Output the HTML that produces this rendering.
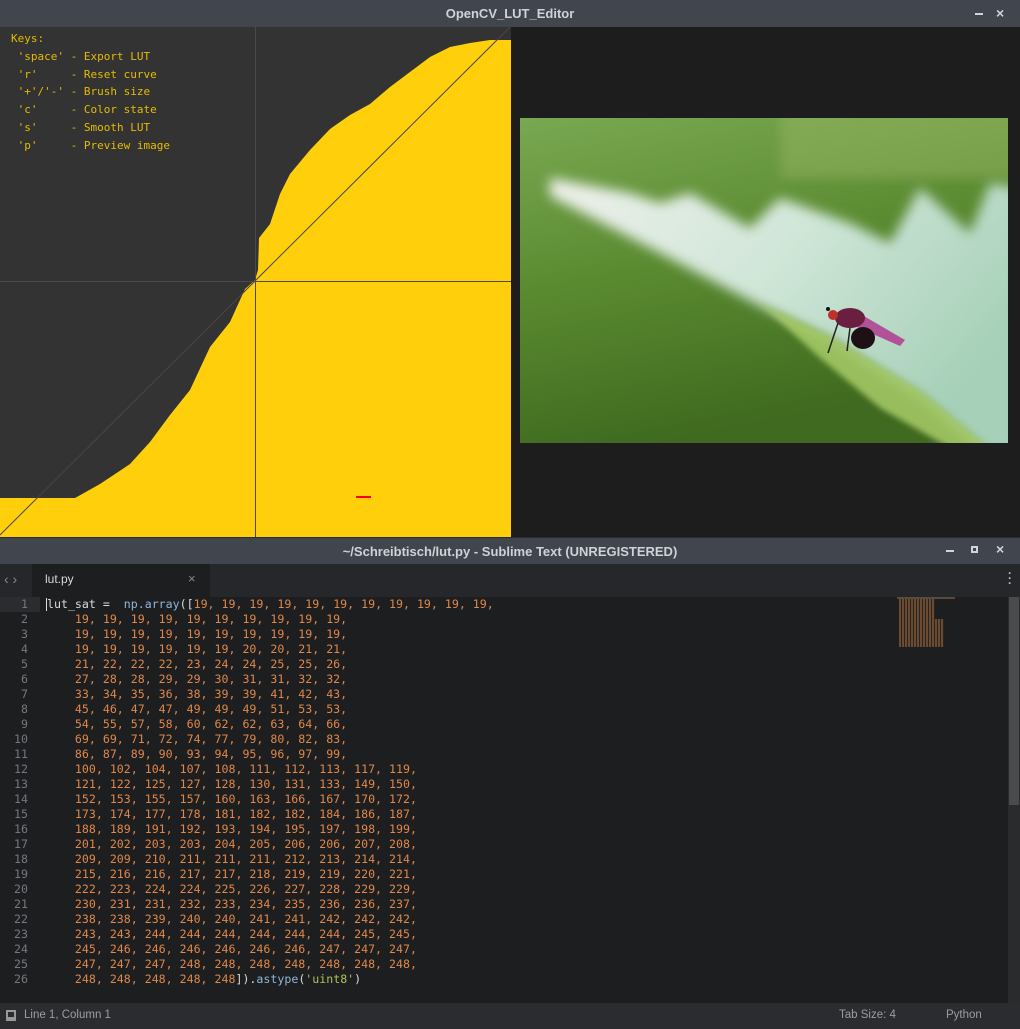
<!DOCTYPE html>
<html><head><meta charset="utf-8"><style>
*{margin:0;padding:0;box-sizing:border-box}
body{width:1020px;height:1029px;background:#1d1e20;position:relative;overflow:hidden;font-family:"Liberation Sans","DejaVu Sans",sans-serif}
.abs{position:absolute}
.tb{background:#41454d;color:#cfd3d8;font-weight:bold;font-size:13px;text-align:center}
.keys{position:absolute;left:11px;top:30px;font-family:"DejaVu Sans Mono",monospace;font-size:11px;color:#e6bc00;line-height:17.8px;white-space:pre}
.code{position:absolute;left:0;top:597px;font-family:"DejaVu Sans Mono",monospace;font-size:11.6px;line-height:15px;white-space:pre}
.ln{position:absolute;left:0;width:28px;text-align:right;color:#737880}
.cl{position:absolute;left:47px;color:#e0874a}
.w{color:#d8dadc}.b{color:#8fb6d8}.g{color:#a9c25a}.c{color:#9ab}
</style></head><body>
<div class="abs tb" style="left:0;top:0;width:1020px;height:27px;line-height:27px">OpenCV_LUT_Editor</div>
<div class="abs" style="left:975px;top:13px;width:8px;height:2px;background:#d0d3d8"></div>
<div class="abs" style="left:996px;top:5px;color:#d0d3d8;font-size:14px;font-weight:bold">×</div>
<div class="abs" style="left:0;top:27px;width:1020px;height:510px;background:#1d1d1d"></div>
<svg class="abs" style="left:0;top:27px" width="511" height="510" viewBox="0 27 511 510">
<rect x="0" y="27" width="511" height="510" fill="#333333"/>
<polygon fill="#fecf0a" points="0,537 0,498 75,498 100,484 130,464 150,442 170,415 190,390 210,347 230,322 245,289 255,280 258,270 259,238 270,224 280,194 290,174 310,150 330,129 350,115 370,104 390,87 410,72 430,57 450,47 470,43 490,40 511,40 511,537"/>
<line x1="0" y1="535" x2="510" y2="27" stroke="#4a4640" stroke-width="1"/>
<line x1="255.5" y1="27" x2="255.5" y2="537" stroke="#4a4a4a" stroke-width="1"/>
<line x1="0" y1="281.5" x2="511" y2="281.5" stroke="#4a4a4a" stroke-width="1"/>
<rect x="356" y="496" width="15" height="2" fill="#f00"/>
</svg>
<div class="keys">Keys:
 'space' - Export LUT
 'r'     - Reset curve
 '+'/'-' - Brush size
 'c'     - Color state
 's'     - Smooth LUT
 'p'     - Preview image</div>
<svg class="abs" style="left:520px;top:118px" width="488" height="325" viewBox="0 0 488 325">
<defs>
<linearGradient id="bg" x1="0" y1="0" x2="0.3" y2="1"><stop offset="0" stop-color="#79a852"/><stop offset="0.5" stop-color="#5a8a30"/><stop offset="1" stop-color="#3f6a1f"/></linearGradient>
<linearGradient id="lf" x1="0" y1="0" x2="1" y2="0.5"><stop offset="0" stop-color="#eef0ea"/><stop offset="0.5" stop-color="#d0e6d8"/><stop offset="1" stop-color="#a6d0b8"/></linearGradient>
<filter id="bl"><feGaussianBlur stdDeviation="6"/></filter>
<filter id="bl2"><feGaussianBlur stdDeviation="3"/></filter>
<clipPath id="cp"><rect width="488" height="325"/></clipPath>
</defs>
<g clip-path="url(#cp)">
<rect width="488" height="325" fill="url(#bg)"/>
<rect x="260" y="-10" width="240" height="70" fill="#a8c070" opacity="0.35" filter="url(#bl)"/>
<polygon filter="url(#bl)" fill="url(#lf)" points="30,60 110,75 140,85 170,75 230,110 260,80 330,105 370,125 400,70 450,115 470,65 500,70 500,340 470,340 400,280 310,222 240,188 140,135 30,78"/>
<polygon filter="url(#bl2)" fill="#a8cc68" opacity="0.85" points="240,185 310,218 400,272 470,330 430,330 360,290 300,240"/>
<polygon points="330,190 385,222 380,228 328,205" fill="#b03a90" opacity="0.85"/>
<ellipse cx="330" cy="200" rx="15" ry="10" fill="#6a1e40"/>
<ellipse cx="343" cy="220" rx="12" ry="11" fill="#1e1014"/>
<circle cx="313" cy="197" r="5" fill="#c0302a"/>
<circle cx="308" cy="191" r="2" fill="#111"/>
<line x1="318" y1="205" x2="308" y2="235" stroke="#222" stroke-width="1.5"/>
<line x1="330" y1="210" x2="327" y2="233" stroke="#222" stroke-width="1.5"/>
</g>
</svg>
<div class="abs tb" style="left:0;top:537px;width:1020px;height:27px;line-height:27px;border-top:1px solid #2b2d30">~/Schreibtisch/lut.py - Sublime Text (UNREGISTERED)</div>
<div class="abs" style="left:946px;top:550px;width:8px;height:2px;background:#d0d3d8"></div>
<div class="abs" style="left:971px;top:546px;width:7px;height:7px;border:2px solid #d0d3d8"></div>
<div class="abs" style="left:996px;top:541px;color:#d0d3d8;font-size:14px;font-weight:bold">×</div>
<div class="abs" style="left:0;top:564px;width:1020px;height:33px;background:#25272a"></div>
<div class="abs" style="left:4px;top:571px;color:#888;font-size:14px">‹ ›</div>
<div class="abs" style="left:32px;top:564px;width:178px;height:33px;background:#1d1e20"></div>
<div class="abs" style="left:45px;top:572px;color:#d6d8da;font-size:12px">lut.py</div>
<div class="abs" style="left:188px;top:571px;color:#888;font-size:13px">×</div>
<div class="abs" style="left:1008px;top:571px;color:#bbb;font-size:12px;font-weight:bold;line-height:5px">·<br>·<br>·</div>
<div class="abs" style="left:0;top:597px;width:1008px;height:406px;background:#1d1e20"></div>
<div class="abs" style="left:0;top:597px;width:40px;height:15px;background:#2a2c30"></div>
<div class="abs" style="left:46px;top:598px;width:1px;height:13px;background:#ddd"></div>
<div class="abs" style="left:1008px;top:597px;width:12px;height:406px;background:#2a2b2d"></div>
<div class="abs" style="left:1009px;top:597px;width:10px;height:208px;background:#4a4b4d"></div>
<div class="abs" style="left:897px;top:597px;width:58px;height:2px;background:#5a4a3a"></div>
<div class="abs" style="left:899px;top:599px;width:36px;height:20px;background:repeating-linear-gradient(90deg,#6b4a32 0 2px,#2a2420 2px 3px)"></div>
<div class="abs" style="left:899px;top:619px;width:45px;height:28px;background:repeating-linear-gradient(90deg,#6b4a32 0 2px,#2a2420 2px 3px)"></div>
<div class="code">
<div class="ln" style="top:0">1</div><div class="ln" style="top:15px">2</div><div class="ln" style="top:30px">3</div><div class="ln" style="top:45px">4</div><div class="ln" style="top:60px">5</div><div class="ln" style="top:75px">6</div><div class="ln" style="top:90px">7</div><div class="ln" style="top:105px">8</div><div class="ln" style="top:120px">9</div><div class="ln" style="top:135px">10</div><div class="ln" style="top:150px">11</div><div class="ln" style="top:165px">12</div><div class="ln" style="top:180px">13</div><div class="ln" style="top:195px">14</div><div class="ln" style="top:210px">15</div><div class="ln" style="top:225px">16</div><div class="ln" style="top:240px">17</div><div class="ln" style="top:255px">18</div><div class="ln" style="top:270px">19</div><div class="ln" style="top:285px">20</div><div class="ln" style="top:300px">21</div><div class="ln" style="top:315px">22</div><div class="ln" style="top:330px">23</div><div class="ln" style="top:345px">24</div><div class="ln" style="top:360px">25</div><div class="ln" style="top:375px">26</div>
<div class="cl" style="top:0"><span class="w">lut_sat =  </span><span class="b">np.array</span><span class="w">([</span>19, 19, 19, 19, 19, 19, 19, 19, 19, 19, 19,</div>
<div class="cl" style="top:15px">    19, 19, 19, 19, 19, 19, 19, 19, 19, 19,</div>
<div class="cl" style="top:30px">    19, 19, 19, 19, 19, 19, 19, 19, 19, 19,</div>
<div class="cl" style="top:45px">    19, 19, 19, 19, 19, 19, 20, 20, 21, 21,</div>
<div class="cl" style="top:60px">    21, 22, 22, 22, 23, 24, 24, 25, 25, 26,</div>
<div class="cl" style="top:75px">    27, 28, 28, 29, 29, 30, 31, 31, 32, 32,</div>
<div class="cl" style="top:90px">    33, 34, 35, 36, 38, 39, 39, 41, 42, 43,</div>
<div class="cl" style="top:105px">    45, 46, 47, 47, 49, 49, 49, 51, 53, 53,</div>
<div class="cl" style="top:120px">    54, 55, 57, 58, 60, 62, 62, 63, 64, 66,</div>
<div class="cl" style="top:135px">    69, 69, 71, 72, 74, 77, 79, 80, 82, 83,</div>
<div class="cl" style="top:150px">    86, 87, 89, 90, 93, 94, 95, 96, 97, 99,</div>
<div class="cl" style="top:165px">    100, 102, 104, 107, 108, 111, 112, 113, 117, 119,</div>
<div class="cl" style="top:180px">    121, 122, 125, 127, 128, 130, 131, 133, 149, 150,</div>
<div class="cl" style="top:195px">    152, 153, 155, 157, 160, 163, 166, 167, 170, 172,</div>
<div class="cl" style="top:210px">    173, 174, 177, 178, 181, 182, 182, 184, 186, 187,</div>
<div class="cl" style="top:225px">    188, 189, 191, 192, 193, 194, 195, 197, 198, 199,</div>
<div class="cl" style="top:240px">    201, 202, 203, 203, 204, 205, 206, 206, 207, 208,</div>
<div class="cl" style="top:255px">    209, 209, 210, 211, 211, 211, 212, 213, 214, 214,</div>
<div class="cl" style="top:270px">    215, 216, 216, 217, 217, 218, 219, 219, 220, 221,</div>
<div class="cl" style="top:285px">    222, 223, 224, 224, 225, 226, 227, 228, 229, 229,</div>
<div class="cl" style="top:300px">    230, 231, 231, 232, 233, 234, 235, 236, 236, 237,</div>
<div class="cl" style="top:315px">    238, 238, 239, 240, 240, 241, 241, 242, 242, 242,</div>
<div class="cl" style="top:330px">    243, 243, 244, 244, 244, 244, 244, 244, 245, 245,</div>
<div class="cl" style="top:345px">    245, 246, 246, 246, 246, 246, 246, 247, 247, 247,</div>
<div class="cl" style="top:360px">    247, 247, 247, 248, 248, 248, 248, 248, 248, 248,</div>
<div class="cl" style="top:375px">    248, 248, 248, 248, 248<span class="w">]).</span><span class="b">astype</span><span class="w">(</span><span class="g">'uint8'</span><span class="w">)</span></div>
</div>
<div class="abs" style="left:0;top:1003px;width:1020px;height:26px;background:#2b2c2f;color:#9a9ea4;font-size:11.5px;line-height:24px">
<div class="abs" style="left:6px;top:7px;width:10px;height:11px;border:2px solid #999;border-bottom-width:4px"></div>
<span class="abs" style="left:24px">Line 1, Column 1</span>
<span class="abs" style="left:839px">Tab Size: 4</span>
<span class="abs" style="left:946px">Python</span>
</div>
</body></html>
